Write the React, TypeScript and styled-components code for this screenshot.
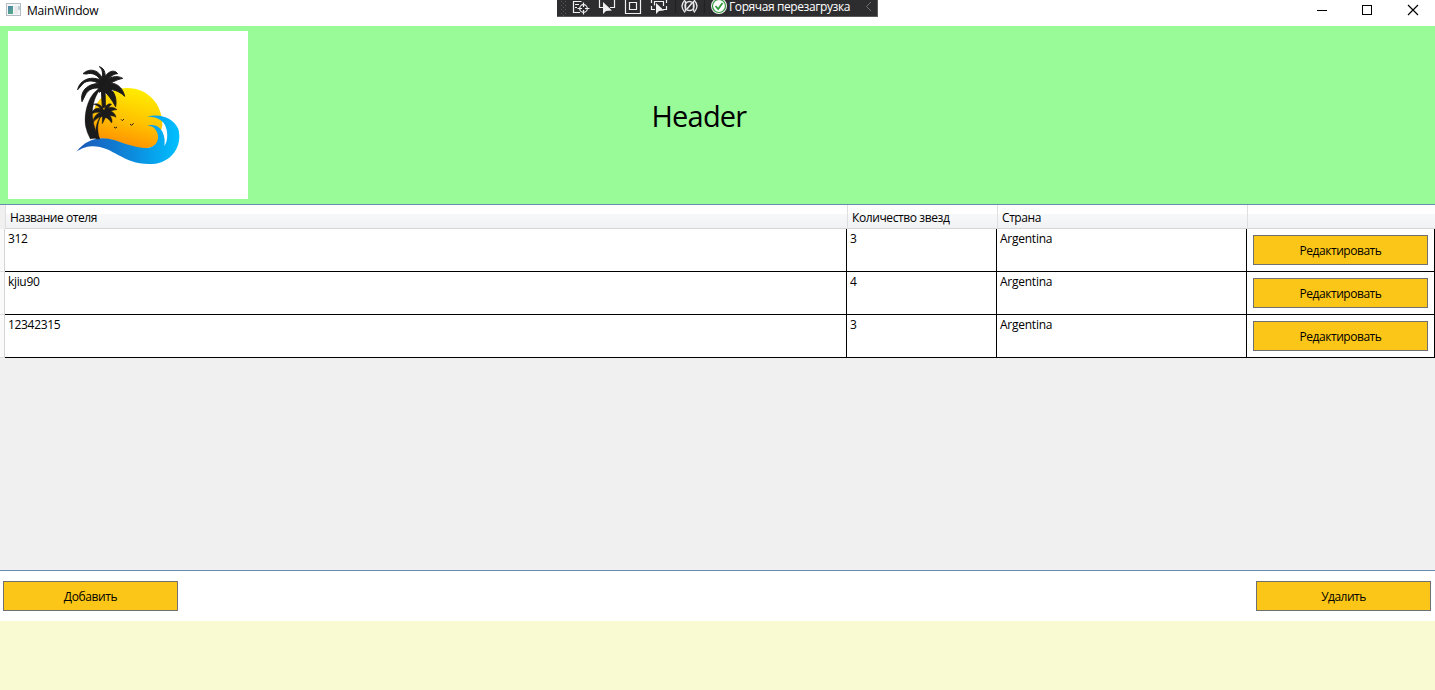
import React from "react";
import styled, { createGlobalStyle } from "styled-components";

const GlobalStyle = createGlobalStyle`
  * { box-sizing: border-box; }
  body { margin: 0; background: #fff; overflow: hidden; }
`;

const Window = styled.div`
  position: relative;
  display: flex;
  flex-direction: column;
  width: 1435px;
  height: 690px;
  background: #fff;
  color: #000;
  font: 12px/16px "Open Sans", "Noto Sans", sans-serif;
`;

const Label = styled.span<{ $spacing?: number }>`
  white-space: nowrap;
  letter-spacing: ${(p) => p.$spacing ?? 0}px;
`;

const TitleBar = styled.header`
  display: flex;
  align-items: flex-start;
  height: 26px;
  flex: none;
  padding: 3px 0 0 6px;
`;

const WindowTitle = styled.div`
  margin-left: 6px;
  flex: 1;
`;

const WindowControls = styled.div`
  display: flex;
  flex: none;
  width: 136px;
`;

const ControlIcon = styled.svg`
  flex: none;
  width: 46px;
  height: 14px;
`;

const DebugBar = styled.div`
  position: absolute;
  top: 0;
  left: 557px;
  width: 321px;
  height: 17px;
  display: flex;
  background: #2d2d30;
  border: solid #5a5a5c;
  border-width: 0 1px 1px 0;
  color: #fff;
`;

const Tool = styled.svg<{ $w: number }>`
  width: ${(p) => p.$w}px;
  height: 16px;
  flex: none;
`;

const ToolText = styled.div`
  flex: none;
  width: 131px;
  padding-left: 2px;
  line-height: 14px;
`;

const Banner = styled.section`
  display: flex;
  height: 178px;
  flex: none;
  padding: 5px 8px;
  background: #98fb98;
`;

const LogoBox = styled.svg`
  width: 240px;
  height: 168px;
  background: #fff;
`;

const BannerTitle = styled.h1`
  margin: 65px 0 0 403.5px;
  font-size: 29px;
  line-height: 40px;
  font-weight: 400;
`;

const DataGrid = styled.section`
  height: 367px;
  flex: none;
  border: solid #688caf;
  border-width: 1px 0;
  background: #f0f0f0;
`;

const GridLine = styled.div`
  display: grid;
  grid-template-columns: 5px 842px 150px 250px 188px;
`;

const HeaderLine = styled(GridLine)`
  height: 24px;
`;

const HeaderCell = styled.div`
  padding: 5px 0 0 4px;
  border-bottom: 1px solid #d5d5d5;
  border-left: 1px solid #dfdfdf;
  background: linear-gradient(#fff 0 9px, #f7f8f9 9px, #f1f2f4);
`;

const RowLine = styled(GridLine)`
  height: 43px;
`;

const RowHandle = styled.div`
  border-right: 1px solid #d5d5d5;
  border-bottom: 1px solid #dfdfdf;
  background: #fafafa;
`;

const Cell = styled.div`
  padding: 2px 0 0 3px;
  border: solid #000;
  border-width: 0 1px 1px 0;
  background: #fff;
`;

const ActionCell = styled(Cell)`
  padding: 6px 0 0 6px;
`;

const Button = styled.button`
  display: flex;
  align-items: center;
  justify-content: center;
  width: 175px;
  height: 30px;
  padding: 2px 0 0;
  border: 1px solid #707070;
  background: #fbc617;
  color: #000;
  font: inherit;
`;

const Actions = styled.section`
  display: flex;
  justify-content: space-between;
  height: 50px;
  flex: none;
  padding: 10px 4px 0 3px;
`;

const Footer = styled.footer`
  flex: 1;
  background: #fafad2;
`;

const hotels = [
  { name: "312", stars: 3, country: "Argentina" },
  { name: "kjiu90", stars: 4, country: "Argentina" },
  { name: "12342315", stars: 3, country: "Argentina" },
];

function Logo() {
  return (
    <LogoBox viewBox="-171 -72 720 504">
      <defs>
        <linearGradient id="sun" x1="0.65" y1="0" x2="0.35" y2="1">
          <stop offset="0" stopColor="#ffee00" />
          <stop offset="0.5" stopColor="#ffc400" />
          <stop offset="1" stopColor="#ff8a00" />
        </linearGradient>
        <linearGradient id="sea">
          <stop offset="0" stopColor="#1b57b8" />
          <stop offset="0.5" stopColor="#0d86d9" />
          <stop offset="1" stopColor="#00c0ff" />
        </linearGradient>
      </defs>
      <path fill="url(#sun)" d="M92 250 C70 190 85 140 125 118 C170 86 235 96 266 135 C285 157 292 185 292 210 L280 262 C255 290 215 280 180 268 C150 255 120 248 92 250Z" />
      <path fill="url(#sea)" d="M34 290 C65 250 110 242 150 256 C190 270 225 282 252 278 C282 272 286 240 270 222 C264 214 256 212 246 214 C262 204 284 212 293 232 C300 248 300 262 298 273 C310 258 310 222 296 204 C284 190 268 184 246 185 C285 174 325 188 340 222 C354 275 318 324 262 327 C175 332 145 272 80 274 C60 275 48 282 34 290Z" />
      <g fill="#1b1b1b" stroke="#1b1b1b" strokeWidth="3" strokeLinejoin="round">
        <path strokeWidth="1" d="M97 104 C64 128 54 190 64 222 C67 236 73 245 76 252 C88 250 96 250 104 252 C78 205 74 150 102 108Z" />
        <path d="M109 100 L120 100 L121 155 L112 160Z" />
        <path strokeWidth="1" d="M114 172 C95 195 88 225 94 252 L104 252 C94 220 98 195 114 176Z" />
        <path d="M112 80 C112 60 116 44 103 35 C122 40 122 62 120 80Z" />
        <path d="M110 84 C100 58 82 52 64 57 L54 56 C76 36 105 46 114 76Z" />
        <path d="M112 94 C92 74 67 74 54 86 L38 104 C44 74 82 58 114 80Z" />
        <path d="M112 102 C90 94 68 102 60 122 L51 140 C44 105 72 82 112 86Z" />
        <path d="M112 84 C120 54 140 43 153 51 L158 56 C142 56 130 70 118 90Z" />
        <path d="M112 88 C130 64 156 60 173 70 C154 74 134 84 118 98Z" />
        <path d="M114 88 C142 76 172 90 179 124 C161 106 141 102 118 102Z" />
        <path d="M114 92 C145 98 157 125 152 155 C141 134 128 116 112 104Z" />
        <path d="M114 86 L97 106 L104 112 L118 98Z" />
      </g>
      <g fill="#1b1b1b" stroke="#1b1b1b" strokeWidth="1.5" strokeLinejoin="round">
        <path d="M117 170 C112 150 98 142 84 148 C98 150 106 158 113 172Z" />
        <path d="M117 166 C98 153 82 162 78 179 C90 170 102 170 116 176Z" />
        <path d="M117 170 C98 170 84 186 84 203 C94 190 104 184 118 184Z" />
        <path d="M118 168 C120 150 132 143 140 148 C132 154 126 162 120 174Z" />
        <path d="M116 168 C128 152 148 155 156 164 C140 164 130 172 118 180Z" />
        <path d="M116 168 C138 162 152 176 153 187 C142 180 130 182 116 184Z" />
        <path d="M116 170 C137 178 144 192 140 204 C132 192 124 186 114 186Z" />
        <path d="M112 174 L112 206 L122 186Z" />
      </g>
      <path fill="none" stroke="#1b1b1b" strokeWidth="3" d="M147 216 L151 219 L156 216 M168 193 L172 197 L177 192 M195 207 L200 211 L206 205" />
    </LogoBox>
  );
}

function DebugToolbar() {
  return (
    <DebugBar>
      <Tool $w={12} viewBox="0 0 12 16" fill="#5c5c60">
        {[1, 5, 9, 13].map((y) => (
          <path key={y} d={`M4 ${y}h1v1h-1z M8 ${y}h1v1h-1z M6 ${y + 2}h1v1h-1z`} />
        ))}
      </Tool>
      <Tool $w={26} viewBox="0 0 26 16" fill="none" stroke="#f0f0f0" strokeWidth="1.2">
        <path d="M4 1.500H12.500 M6 4.500H10 M6 7.500H8 M4 12.500H11 M4.500 1V13" />
        <circle cx="14.500" cy="8.500" r="3.800" />
        <path d="M14.500 2.500V7 M14.500 10V14.500 M8.500 8.500H13 M16 8.500H20.500" />
      </Tool>
      <Tool $w={26} viewBox="0 0 26 16" fill="none" stroke="#f0f0f0" strokeWidth="1.2">
        <path d="M4.500 0V7.500H8 M19.500 0V7.500H15" />
        <path d="M8 2V14L11 11L17 10.500Z" fill="#f0f0f0" stroke="none" />
      </Tool>
      <Tool $w={26} viewBox="0 0 26 16" fill="none" stroke="#f0f0f0" strokeWidth="1.2">
        <path d="M4.500 -1V13.500H19.500V-1 M8.500 2.500H15.500V9.500H8.500Z" />
      </Tool>
      <Tool $w={26} viewBox="0 0 26 16" fill="none" stroke="#f0f0f0" strokeWidth="1.2">
        <path d="M7 1.500H17 M4.500 0V3 M19.500 0V3 M4.500 6V9.500H8 M19.500 6V9.500H16 M7.500 5.500V1.500 M16.500 2V6" />
        <path d="M9 3V14L12 11L17 10.500Z" fill="#f0f0f0" stroke="none" />
      </Tool>
      <Tool $w={34} viewBox="0 0 34 16" fill="none" stroke="#e8e8e8" strokeWidth="1.3">
        <path d="M2.500 0V13 M31.500 0V13" stroke="#222225" />
        <path d="M12 0Q6 6 12 12.500 M21 0Q27 6 21 12.500" />
        <circle cx="16.500" cy="6" r="4.500" />
        <path d="M14 9L19 3 M12.500 1V11.500 M20.500 1V11.500" strokeWidth="1.5" />
      </Tool>
      <Tool $w={20} viewBox="0 0 20 16">
        <circle cx="12" cy="6" r="8" fill="#f4f4f4" />
        <circle cx="12" cy="6" r="6.500" fill="#fff" stroke="#329a3d" strokeWidth="1.200" />
        <path d="M8.500 6L11.200 9L15.500 3" fill="none" stroke="#329a3d" strokeWidth="1.800" />
      </Tool>
      <ToolText>
        <Label $spacing={-0.4}>Горячая перезагрузка</Label>
      </ToolText>
      <Tool $w={20} viewBox="0 0 20 16" fill="none" stroke="#707074">
        <path d="M13 2L8.500 6.500L13 11" />
      </Tool>
    </DebugBar>
  );
}

export default function App() {
  return (
    <Window>
      <GlobalStyle />
      <TitleBar>
        <svg width="15" height="14" viewBox="0 0 15 14">
          <defs>
            <linearGradient id="screen" x1="0" y1="0" x2="0.6" y2="1">
              <stop offset="0" stopColor="#4d82b0" />
              <stop offset="1" stopColor="#56a986" />
            </linearGradient>
          </defs>
          <rect x="0.500" y="0.500" width="14" height="12" fill="#f4f6f8" stroke="#b4bcc4" />
          <rect x="2" y="3" width="5" height="8" fill="url(#screen)" />
          <rect x="8" y="3" width="4" height="8" fill="#e8eaec" />
          <rect x="12" y="3" width="2" height="4" fill="#b9d0d4" />
        </svg>
        <WindowTitle>
          <Label $spacing={-0.17}>MainWindow</Label>
        </WindowTitle>
        <WindowControls>
          <ControlIcon viewBox="0 0 46 14" stroke="#000"><path d="M18 7.500H28" /></ControlIcon>
          <ControlIcon viewBox="0 0 46 14" stroke="#000" fill="none"><rect x="17.500" y="2.500" width="9" height="9" /></ControlIcon>
          <ControlIcon viewBox="0 0 46 14" stroke="#000" strokeWidth="1.200"><path d="M17 2L27 12M27 2L17 12" /></ControlIcon>
        </WindowControls>
      </TitleBar>
      <Banner>
        <Logo />
        <BannerTitle><Label $spacing={-0.8}>Header</Label></BannerTitle>
      </Banner>
      <DataGrid>
        <HeaderLine>
          <div />
          <HeaderCell><Label $spacing={-0.44}>Название отеля</Label></HeaderCell>
          <HeaderCell><Label $spacing={-0.4}>Количество звезд</Label></HeaderCell>
          <HeaderCell><Label $spacing={-0.42}>Страна</Label></HeaderCell>
          <HeaderCell />
        </HeaderLine>
        {hotels.map((h) => (
          <RowLine key={h.name}>
            <RowHandle />
            <Cell><Label $spacing={-0.33}>{h.name}</Label></Cell>
            <Cell><Label>{h.stars}</Label></Cell>
            <Cell><Label $spacing={-0.25}>{h.country}</Label></Cell>
            <ActionCell><Button><Label $spacing={-0.46}>Редактировать</Label></Button></ActionCell>
          </RowLine>
        ))}
      </DataGrid>
      <Actions>
        <Button><Label $spacing={-0.4}>Добавить</Label></Button>
        <Button><Label $spacing={-0.5}>Удалить</Label></Button>
      </Actions>
      <Footer />
      <DebugToolbar />
    </Window>
  );
}
